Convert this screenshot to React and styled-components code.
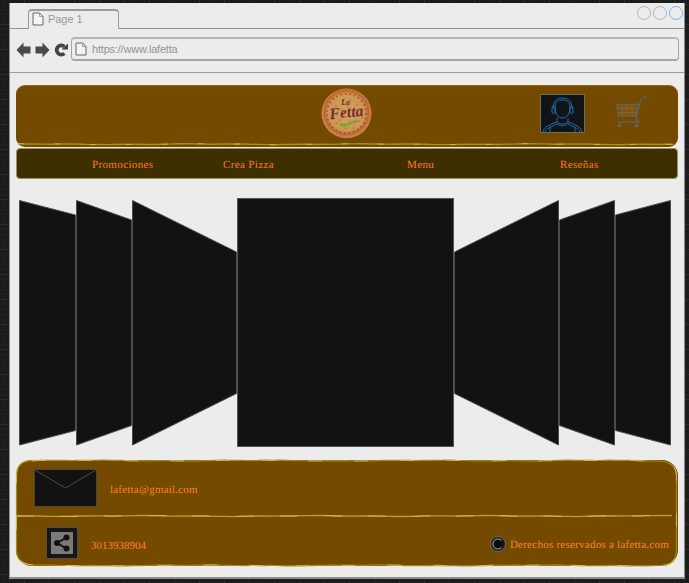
import React from "react";
import styled, { createGlobalStyle } from "styled-components";

const Global = createGlobalStyle`
  html, body { margin: 0; padding: 0; height: 583px; overflow: hidden; }
  body {
    background-color: #1b1b1b;
    background-image:
      linear-gradient(#2b2b2b 1px, transparent 1px),
      linear-gradient(90deg, #2b2b2b 1px, transparent 1px),
      linear-gradient(#212121 1px, transparent 1px),
      linear-gradient(90deg, #212121 1px, transparent 1px);
    background-size: 25px 25px, 25px 25px, 5px 5px, 5px 5px;
    background-position: -1px -1px;
  }
`;

const Window = styled.div`
  box-sizing: border-box;
  margin: 3px 0 0 9px;
  width: 676px;
  height: 576px;
  background: #ececec;
  border-left: 1px solid #8c8c8c;
  border-right: 1px solid #8c8c8c;
  border-bottom: 2px solid #8c8c8c;
  display: flex;
  flex-direction: column;
`;

const TabRow = styled.div`
  box-sizing: border-box;
  height: 26px;
  border-bottom: 1px solid #8f8f8f;
  display: flex;
  align-items: flex-end;
  justify-content: space-between;
  padding: 0 1px 0 18px;
`;

const Tab = styled.div`
  box-sizing: border-box;
  width: 91px;
  height: 20px;
  margin-bottom: -1px;
  background: #ececec;
  border: 1px solid #9a9a9a;
  border-top-width: 2px;
  border-bottom: none;
  border-radius: 4px 4px 0 0;
  display: flex;
  align-items: center;
  gap: 4px;
  padding: 0 0 2px 3px;
  font: 11px "Liberation Sans", Arial, sans-serif;
  letter-spacing: -0.05px;
  color: #989898;
`;

const Dots = styled.div`
  display: flex;
  gap: 2px;
  align-self: flex-start;
  margin-top: 3px;
`;

const Dot = styled.span`
  box-sizing: border-box;
  width: 14px;
  height: 14px;
  border-radius: 50%;
  border: 1px solid ${(p) => (p.$active ? "#6db5f2" : "#b4b4b4")};
`;

const AddressRow = styled.div`
  box-sizing: border-box;
  height: 44px;
  border-bottom: 1px solid #9a9a9a;
  display: flex;
  align-items: center;
  padding: 0 5px 4px 6px;
`;

const NavIcons = styled.div`
  display: flex;
  align-items: center;
  gap: 4px;
  width: 55px;
  margin-top: 3px;
  flex: none;
`;

const Address = styled.div`
  box-sizing: border-box;
  flex: 1;
  height: 24px;
  border: 1px solid #a6a6a6;
  border-top: 2px solid #b6b6b6;
  border-bottom-width: 2px;
  border-radius: 4px;
  display: flex;
  align-items: center;
  gap: 5px;
  padding-left: 3px;
  font: 11px "Liberation Sans", Arial, sans-serif;
  letter-spacing: -0.2px;
  color: #949494;
`;

const Page = styled.div`
  padding: 12px 6px 0 6px;
  display: flex;
  flex-direction: column;
`;

const Header = styled.header`
  position: relative;
  box-sizing: border-box;
  height: 62px;
  background: #734a00;
  border-radius: 9px;
  border-top: 1px solid #8f6a08;
  display: flex;
  align-items: center;
  padding: 0 0 0 305px;
`;

const Logo = styled.div`
  width: 51px;
  height: 51px;
  margin-top: -6px;
  flex: none;
`;

const Avatar = styled.div`
  box-sizing: border-box;
  width: 45px;
  height: 39px;
  margin: -6px 0 0 168px;
  background: #111417;
  border: 1px solid #6d6d5e;
  flex: none;
`;

const Cart = styled.div`
  width: 33px;
  height: 33px;
  margin: -9px 0 0 30px;
  flex: none;
`;

const WavyLine = styled.svg`
  position: absolute;
  left: 0;
  bottom: ${(p) => p.$bottom}px;
  display: block;
  overflow: visible;
`;

const Nav = styled.nav`
  box-sizing: border-box;
  height: 31px;
  margin-top: 1px;
  background: #3d2f00;
  border: 1px solid #9a9060;
  border-radius: 4px;
  display: grid;
  grid-template-columns: 131px 184px 153px auto;
  align-items: center;
  padding: 2px 0 0 75px;
`;

const NavItem = styled.a`
  font: 11px "Liberation Serif", serif;
  letter-spacing: 0.36px;
  text-rendering: geometricPrecision;
  color: #ff7a20;
`;

const Carousel = styled.section`
  display: flex;
  align-items: flex-start;
  height: 249px;
  margin: 19px 0 13px;
  padding-left: 3px;
`;

const Slide = styled.svg`
  display: block;
  flex: none;
  overflow: visible;
  margin-top: 2px;
`;

const Center = styled.div`
  box-sizing: border-box;
  width: 217px;
  height: 249px;
  background: #121212;
  border: 1px solid #555;
  flex: none;
`;

const Footer = styled.footer`
  position: relative;
  box-sizing: border-box;
  height: 106px;
  background: #734a00;
  border-radius: 16px;
  display: flex;
  flex-direction: column;
`;

const Outline = styled.svg`
  position: absolute;
  inset: 0;
  display: block;
  overflow: visible;
`;

const FooterTop = styled.div`
  height: 56px;
  display: flex;
  align-items: flex-start;
  padding: 9px 0 0 18px;
  gap: 13px;
  box-sizing: border-box;
`;

const FooterBottom = styled.div`
  flex: 1;
  display: flex;
  align-items: flex-start;
  padding: 11px 9px 0 30px;
  box-sizing: border-box;
`;

const Envelope = styled.div`
  width: 63px;
  height: 38px;
  flex: none;
`;

const FooterText = styled.span`
  font: 11px "Liberation Serif", serif;
  letter-spacing: ${(p) => p.$spacing ?? 0.2}px;
  text-rendering: geometricPrecision;
  color: #ff8226;
`;

const Email = styled(FooterText)`
  margin-top: 15px;
`;

const Phone = styled(FooterText)`
  margin: 13px 0 0 13px;
`;

const Share = styled.div`
  box-sizing: border-box;
  width: 32px;
  height: 32px;
  background: #161616;
  border: 1px solid #4f4f4f;
  border-radius: 2px;
  padding: 4px;
  flex: none;
`;

const Copyright = styled.div`
  margin: 9px 0 0 auto;
  display: flex;
  align-items: center;
  gap: 4px;
`;

const CopyrightText = styled(FooterText)`
  position: relative;
  top: 1px;
`;

const wob = (x, s) =>
  Math.sin(x * 0.11 + s) * 0.2 + Math.sin(x * 0.037 + s * 2.1) * 0.3 + Math.sin(x * 0.31 + s * 3.3) * 0.1;

const wobbleLine = (x0, x1, y, s) => {
  let d = "";
  const dir = x1 > x0 ? 1 : -1;
  for (let x = x0; dir > 0 ? x <= x1 : x >= x1; x += dir * 8) {
    d += `${d ? "L" : "M"}${x} ${(y + wob(x, s)).toFixed(2)} `;
  }
  return d;
};

const wobbleRect = (w, h, r) => {
  let d = wobbleLine(r, w - r, 0.6, 1);
  d += `Q${w - 0.5} 0.6 ${w - 0.5} ${r} L${w - 0.5} ${h - r} Q${w - 0.5} ${h - 0.6} ${w - r} ${h - 0.6} `;
  d += wobbleLine(w - r, r, h - 0.6, 2).replace(/^M/, "L");
  d += `Q0.5 ${h - 0.6} 0.5 ${h - r} L0.5 ${r} Q0.5 0.6 ${r} 0.6`;
  return d;
};

const PageGlyph = () => (
  <svg width="12" height="14" viewBox="0 0 12 14" style={{ flex: "none" }}>
    <path d="M1 1h6.5L11 4.5V13H1z" fill="#f4f4f4" stroke="#666" strokeWidth="1" />
    <path d="M7.5 1v3.5H11" fill="none" stroke="#888" strokeWidth="0.8" />
  </svg>
);

const Arrow = ({ flip }) => (
  <svg width="15" height="16" viewBox="0 0 15 16" style={{ transform: flip ? "scaleX(-1)" : "none", flex: "none" }}>
    <path d="M0.5 8 L7.5 0.5 V4.5 H14.5 V11.5 H7.5 V15.5 Z" fill="#4a4a4a" />
  </svg>
);

const Refresh = () => (
  <svg width="14" height="14" viewBox="0 0 14 14" style={{ flex: "none" }}>
    <path d="M10.4 10.4 A4.6 4.6 0 1 1 10.4 3.6" fill="none" stroke="#454545" strokeWidth="3.8" />
    <path d="M7.6 6.4 L14 6.4 L14 0.4 Z" fill="#454545" />
  </svg>
);

const specks = [
  [15, 18], [22, 13], [30, 12], [37, 17], [40, 24], [13, 27], [16, 36], [25, 41], [33, 41], [39, 34],
  [27, 19], [19, 33], [35, 35], [10, 22], [42, 30], [21, 22], [33, 22], [12, 32], [29, 35], [24, 37],
];

const PizzaLogo = () => (
  <svg width="51" height="51" viewBox="0 0 52 52" style={{ display: "block" }}>
    <defs>
      <radialGradient id="pz" cx="50%" cy="48%" r="52%">
        <stop offset="0%" stopColor="#cfa25c" />
        <stop offset="72%" stopColor="#c99752" />
        <stop offset="84%" stopColor="#c0642e" />
        <stop offset="95%" stopColor="#cd8650" />
        <stop offset="100%" stopColor="#85654e" />
      </radialGradient>
    </defs>
    <circle cx="26" cy="26" r="25.5" fill="url(#pz)" />
    <circle cx="26" cy="26" r="20" fill="none" stroke="#8f3c2c" strokeWidth="1.6" strokeDasharray="1.6 3" opacity="0.8" />
    {specks.map(([x, y]) => (
      <circle key={`${x}-${y}`} cx={x} cy={y} r="1" fill="#b4702c" opacity="0.75" />
    ))}
    <text x="25" y="17" fontFamily="Liberation Serif, serif" fontSize="8" fontStyle="italic" fontWeight="700" fill="#6e2a28" textAnchor="middle">La</text>
    <text x="26" y="30" fontFamily="Liberation Serif, serif" fontSize="16" fontStyle="italic" fontWeight="700" fill="#7a2a33" textAnchor="middle" transform="rotate(-6 26 26)">Fetta</text>
    <path d="M19 37 Q24 39 28 37 T37 33" fill="none" stroke="#7fa13c" strokeWidth="2.4" />
  </svg>
);

const UserIcon = () => (
  <svg width="43" height="37" viewBox="0 0 43 37" fill="none" stroke="#1f6fb3" strokeWidth="1" style={{ display: "block" }}>
    <path d="M12 14 C12 6 15.5 3 21.5 3 C27.5 3 31 6 31 14" />
    <path d="M14 12 C14 7 17 5 21.5 5 C26 5 29 7 29 12 C29 19 26 23 21.5 23 C17 23 14 19 14 12Z" />
    <rect x="11" y="11.5" width="3" height="7" rx="1.4" />
    <rect x="29" y="11.5" width="3" height="7" rx="1.4" />
    <path d="M16 23 V26 C18 30 25 30 27 26 V23" />
    <path d="M15 27 C18 32 25 32 28 27" />
    <path d="M2 37 C2.5 32 8 30.5 15 27 M41 37 C40.5 32 35 30.5 28 27" />
    <path d="M4 37 C5 33.5 10 32 16 29 M39 37 C38 33.5 33 32 27 29" />
    <path d="M9 32 V37 M34 32 V37" />
  </svg>
);

const CartIcon = () => (
  <svg width="33" height="33" viewBox="0 0 33 33" fill="none" style={{ display: "block" }}>
    <path d="M1.5 8.5 H23 L20.5 20 H3.5 Z" fill="#7a5410" stroke="#62625c" strokeWidth="1.5" />
    <path d="M7 9 V20 M12 9 V20 M17 9 V20 M2.5 12.5 H22 M3 16.5 H21" stroke="#96692a" strokeWidth="0.7" />
    <path d="M32 1 C28 1 26.5 2 25.5 5.5 L21 21 L23.5 26 H2.5" stroke="#62625c" strokeWidth="1.6" />
    <circle cx="4.5" cy="29.5" r="2" fill="#62625c" />
    <circle cx="21.5" cy="29.5" r="2" fill="#62625c" />
  </svg>
);

const EnvelopeIcon = () => (
  <svg width="63" height="38" viewBox="0 0 63 38" style={{ display: "block" }}>
    <rect x="0.5" y="0.5" width="62" height="37" fill="#121212" stroke="#47473f" />
    <path d="M1 1 L31.5 19 L62 1" fill="none" stroke="#4c4c46" strokeWidth="1" />
  </svg>
);

const ShareIcon = () => (
  <svg width="22" height="22" viewBox="0 0 22 22" style={{ display: "block" }}>
    <rect width="22" height="22" fill="#7a7a7a" />
    <path d="M15.5 5.5 L6 11 L15.5 16.5" fill="none" stroke="#111" strokeWidth="2" />
    <circle cx="15.5" cy="5.5" r="3" fill="#111" />
    <circle cx="6" cy="11" r="3" fill="#111" />
    <circle cx="15.5" cy="16.5" r="3" fill="#111" />
  </svg>
);

const CopyrightIcon = () => (
  <svg width="16" height="16" viewBox="0 0 16 16" style={{ flex: "none" }}>
    <circle cx="8" cy="8" r="7.5" fill="#222" stroke="#666" />
    <circle cx="8" cy="8" r="5.6" fill="#0c0c0c" />
    <path d="M11.6 4.6 A5 5 0 1 0 11.6 11.4" fill="none" stroke="#aaa" strokeWidth="1" />
  </svg>
);

const SlideShape = ({ w, inset, mirror }) => {
  const h = 245.5;
  const d = mirror
    ? `M0.5 ${inset} L${w - 0.5} 0.5 L${w - 0.5} ${h - 0.5} L0.5 ${h - inset} Z`
    : `M0.5 0.5 L${w - 0.5} ${inset} L${w - 0.5} ${h - inset} L0.5 ${h - 0.5} Z`;
  return (
    <Slide width={w} height={h} viewBox={`0 0 ${w} ${h}`}>
      <path d={d} fill="#121212" stroke="#4c4c4c" strokeWidth="1" />
    </Slide>
  );
};

export default function App() {
  return (
    <>
      <Global />
      <Window>
        <TabRow>
          <Tab>
            <PageGlyph />
            Page 1
          </Tab>
          <Dots>
            <Dot />
            <Dot />
            <Dot $active />
          </Dots>
        </TabRow>
        <AddressRow>
          <NavIcons>
            <Arrow />
            <Arrow flip />
            <Refresh />
          </NavIcons>
          <Address>
            <PageGlyph />
            https://www.lafetta
          </Address>
        </AddressRow>
        <Page>
          <Header>
            <Logo><PizzaLogo /></Logo>
            <Avatar><UserIcon /></Avatar>
            <Cart><CartIcon /></Cart>
            <WavyLine $bottom={1} width="661" height="3" viewBox="0 0 661 3">
              <path d={wobbleLine(2, 658, 1.2, 5)} fill="none" stroke="#a98f14" strokeWidth="1.4" />
              <path d={wobbleLine(2, 658, 1.2, 5)} fill="none" stroke="#d3c04a" strokeWidth="0.8" strokeDasharray="6 30" />
            </WavyLine>
          </Header>
          <Nav>
            <NavItem>Promociones</NavItem>
            <NavItem>Crea Pizza</NavItem>
            <NavItem>Menu</NavItem>
            <NavItem>Reseñas</NavItem>
          </Nav>
          <Carousel>
            <SlideShape w={57} inset={15} />
            <SlideShape w={56} inset={20} />
            <SlideShape w={105} inset={52} />
            <Center />
            <SlideShape w={105} inset={52} mirror />
            <SlideShape w={56} inset={20} mirror />
            <SlideShape w={56} inset={15} mirror />
          </Carousel>
          <Footer>
            <Outline width="661" height="106" viewBox="0 0 661 106">
              <path d={wobbleRect(661, 106, 16)} fill="none" stroke="#a58c14" strokeWidth="1.2" />
              <path d={wobbleRect(661, 106, 16)} fill="none" stroke="#d8c860" strokeWidth="0.8" strokeDasharray="14 32" />
              <path d={wobbleLine(0, 661, 56, 3)} fill="none" stroke="#b8a12a" strokeWidth="1.3" />
              <path d={wobbleLine(0, 661, 56, 3)} fill="none" stroke="#d8c860" strokeWidth="0.8" strokeDasharray="18 26" />
            </Outline>
            <FooterTop>
              <Envelope><EnvelopeIcon /></Envelope>
              <Email>lafetta@gmail.com</Email>
            </FooterTop>
            <FooterBottom>
              <Share><ShareIcon /></Share>
              <Phone $spacing={0}>3013938904</Phone>
              <Copyright>
                <CopyrightIcon />
                <CopyrightText $spacing={0.25}>Derechos reservados a lafetta.com</CopyrightText>
              </Copyright>
            </FooterBottom>
          </Footer>
        </Page>
      </Window>
    </>
  );
}
